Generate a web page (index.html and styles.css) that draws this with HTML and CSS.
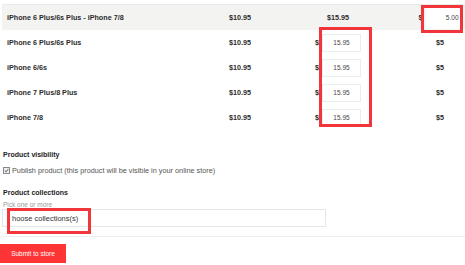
FILE: index.html
```html
<!DOCTYPE html>
<html>
<head>
<meta charset="utf-8">
<title>Shipping prices</title>
<link rel="stylesheet" href="styles.css">
</head>
<body>
<div class="page">
    <div class="rates">
        <div class="rate head">
            <div class="model">iPhone 6 Plus/6s Plus - iPhone 7/8</div>
            <div class="cell">$10.95</div>
            <div class="cell">$15.95</div>
            <div class="cell"><span>$</span><input class="price right" value="5.00"></div>
        </div>
        <div class="rate">
            <div class="model">iPhone 6 Plus/6s Plus</div>
            <div class="cell">$10.95</div>
            <div class="cell"><span>$</span><input class="price" value="15.95"></div>
            <div class="cell">$5</div>
        </div>
        <div class="rate">
            <div class="model">iPhone 6/6s</div>
            <div class="cell">$10.95</div>
            <div class="cell"><span>$</span><input class="price" value="15.95"></div>
            <div class="cell">$5</div>
        </div>
        <div class="rate">
            <div class="model">iPhone 7 Plus/8 Plus</div>
            <div class="cell">$10.95</div>
            <div class="cell"><span>$</span><input class="price" value="15.95"></div>
            <div class="cell">$5</div>
        </div>
        <div class="rate">
            <div class="model">iPhone 7/8</div>
            <div class="cell">$10.95</div>
            <div class="cell"><span>$</span><input class="price" value="15.95"></div>
            <div class="cell">$5</div>
        </div>
    </div>

    <div class="group visibility">
        <h4>Product visibility</h4>
        <label class="check"><span class="box"><svg viewBox="0 0 6 6" width="5" height="5"><path d="M1 3.2 L2.5 4.6 L5 1.4" fill="none" stroke="#555" stroke-width="1.2"/></svg></span>Publish product (this product will be visible in your online store)</label>
    </div>

    <div class="group collections">
        <h4>Product collections</h4>
        <p class="hint">Pick one or more</p>
        <div class="picker">hoose collections(s)</div>
    </div>

    <div class="actions">
        <button class="submit">Submit to store</button>
    </div>
</div>

<div class="mark mark-top"></div>
<div class="mark mark-col"></div>
<div class="mark mark-pick"></div>
</body>
</html>
```

FILE: styles.css
```css
html,body{margin:0;padding:0;overflow:hidden;width:465px;height:265px;background:#fff;}
body{font-family:"Liberation Sans",Arial,sans-serif;color:#2b2b2b;position:relative;}
.page{display:flex;flex-direction:column;}

.rates{margin:4px 0 0 2px;border-top:1px solid #e9e9e9;width:482px;}
.rate{display:grid;grid-template-columns:193px 80px 116px 88px;height:25px;align-items:center;padding-left:5px;font-size:7.2px;font-weight:bold;}
.rate.head{background:#f3f3f2;}
.cell{display:flex;justify-content:center;align-items:center;gap:3px;}
.price{width:39px;height:18px;box-sizing:border-box;border:1px solid #ececec;background:#fff;font:6.5px "Liberation Sans",Arial,sans-serif;color:#444;text-align:center;padding:0 2px;outline:none;}
.price.right{width:36px;height:22px;text-align:right;border-color:#fff;}

.group{margin-left:3px;}
.group h4{margin:0;font-size:7px;font-weight:bold;color:#222;}
.visibility{margin-top:21px;}
.check{display:flex;align-items:center;gap:2px;margin-top:8px;font-size:7.3px;color:#555;}
.box{display:inline-flex;width:5px;height:5px;border:0.5px solid #888;background:#eee;align-items:center;justify-content:center;}
.collections{margin-top:14px;margin-left:3px;}
.hint{margin:5px 0 0;font-size:6.5px;color:#999;}
.picker{margin:1px 0 0 -1px;width:324px;height:18px;box-sizing:border-box;border:1px solid #e6e6e6;font-size:7.5px;color:#333;padding-left:9px;display:flex;align-items:center;}

.actions{margin-top:9px;border-top:1px solid #efefef;padding-top:7px;}
.submit{display:block;width:66px;height:19px;border:0;background:#ff3535;color:#fff;font:6.5px "Liberation Sans",Arial,sans-serif;padding:0;}

.mark{position:absolute;border:3px solid #f2353b;box-sizing:border-box;}
.mark-top{left:421px;top:5px;width:42px;height:28px;}
.mark-col{left:319px;top:27px;width:53px;height:100px;}
.mark-pick{left:7px;top:208px;width:84px;height:26px;}
```
